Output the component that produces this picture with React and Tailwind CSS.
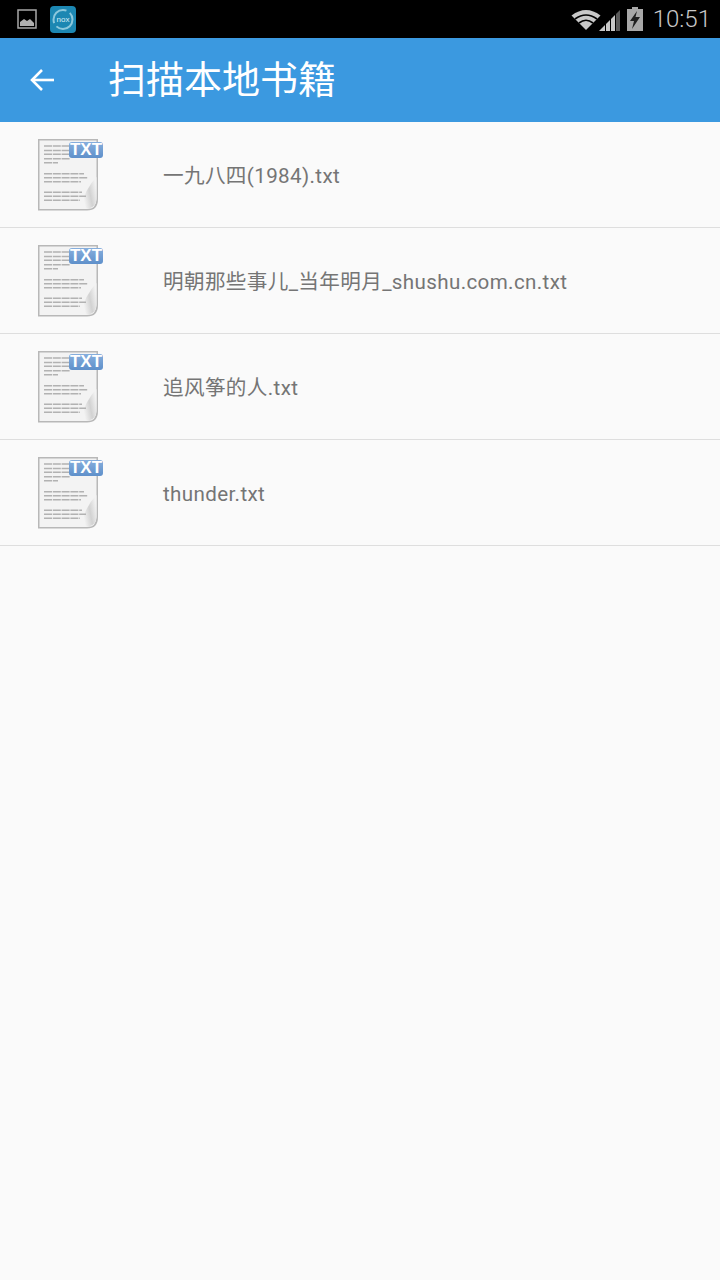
const FILES = ["一九八四(1984).txt", "明朝那些事儿_当年明月_shushu.com.cn.txt", "追风筝的人.txt", "thunder.txt"];

const TEXT_LINES = [
  [7, 28], [11.5, 28], [15.3, 30], [19.7, 26], [23.7, 14],
  [34.7, 40], [38.7, 44], [42.7, 37],
  [53.3, 38], [57.3, 42], [61.3, 36],
];

function TxtIcon() {
  return (
    <svg width="66" height="72" viewBox="0 0 66 72" className="block">
      <defs>
        <linearGradient id="sheen" x1="1" y1="0.35" x2="0.2" y2="0.65">
          <stop offset="0" stopColor="#f3f3f3" />
          <stop offset="0.5" stopColor="#d2d2d2" />
          <stop offset="1" stopColor="#f3f3f3" />
        </linearGradient>
        <linearGradient id="badge" x1="0" y1="0" x2="0" y2="1">
          <stop offset="0" stopColor="#86aedd" />
          <stop offset="1" stopColor="#5f90ca" />
        </linearGradient>
      </defs>
      <path d="M0.75 0.75H59.25V60Q59.25 70.75 49 70.75H0.75Z" fill="#f3f3f3" stroke="#b8b8b8" strokeWidth="1.5" />
      <path d="M42 69.5Q47 50 58.5 38V60Q58 69 49 69.5Z" fill="url(#sheen)" />
      {TEXT_LINES.map(([y, w], i) => (
        <line key={i} x1="6" y1={y} x2={6 + w} y2={y} stroke="#b2b2b2" strokeWidth="1.5" strokeDasharray="8 0.8" />
      ))}
      <rect x="31" y="3" width="34" height="16" rx="3" fill="url(#badge)" />
    </svg>
  );
}

function FileRow({ name }) {
  return (
    <div className="flex h-[106px] items-center border-b border-[#dedede]">
      <div className="relative ml-[38px] h-[72px] w-[125px]">
        <TxtIcon />
        <span className="absolute left-[31px] top-[3px] w-[34px] text-center text-[17px] leading-[16px] font-bold text-white font-['Liberation_Sans',sans-serif]">TXT</span>
      </div>
      <span className="mt-[2px] text-[20.6px] leading-[28px] tracking-[0.36px] text-[#757575]">{name}</span>
    </div>
  );
}

export default function App() {
  return (
    <div className="flex h-[1280px] w-[720px] flex-col overflow-hidden bg-[#fafafa] font-['Roboto','Noto_Sans_CJK_SC',sans-serif]">
      {/* Status bar */}
      <div className="flex h-[38px] items-center bg-black">
        <svg width="20" height="20" viewBox="0 0 20 20" className="ml-[17px]">
          <rect x="1" y="1" width="18" height="18" fill="none" stroke="#a8a8a8" strokeWidth="1.5" />
          <path d="M3 17V13L7 10L10 12L13 10L17 14V17Z" fill="#b0b0b0" />
        </svg>
        <svg width="26" height="27" viewBox="0 0 26 27" className="ml-[13px]">
          <rect width="26" height="27" rx="4" fill="#1c87b2" />
          <circle cx="13" cy="13.5" r="9.5" fill="none" stroke="#8cc8dc" strokeWidth="2" strokeDasharray="22 4" />
          <text x="13" y="16" textAnchor="middle" fontSize="8" fill="#d8eef6" fontFamily="Liberation Sans">nox</text>
        </svg>
        <svg width="30" height="22" viewBox="0 0 30 22" className="ml-auto">
          <path d="M0.5 7.5Q15 -3.5 29.5 7.5L15 22Z" fill="#c8c8c8" />
          <path d="M4 11Q15 3 26 11" fill="none" stroke="#000" strokeWidth="1.6" />
          <path d="M8 15Q15 9.5 22 15" fill="none" stroke="#000" strokeWidth="1.6" />
        </svg>
        <svg width="22" height="24" viewBox="0 0 22 24" className="ml-[-2px]">
          <path d="M0 24L6 18V24Z" fill="#c8c8c8" />
          <path d="M7 17L11 13V24H7Z" fill="#c8c8c8" />
          <path d="M12 12L16 8V24H12Z" fill="#c8c8c8" />
          <path d="M17 7L21 3V24H17Z" fill="#5a5a5a" />
        </svg>
        <svg width="16" height="24" viewBox="0 0 16 24" className="ml-[6px]">
          <path d="M5 0H11V2H16V24H0V2H5Z" fill="#a8a8a8" />
          <path d="M10 4L3 14H7L5 22L13 10H8.5Z" fill="#202020" />
        </svg>
        <span className="ml-[10px] mr-[9px] text-[24px] leading-[38px] font-light text-[#c8c8c8]">10:51</span>
      </div>

      {/* Toolbar */}
      <div className="flex h-[84px] items-center bg-[#3b99e0]">
        <svg width="24" height="24" viewBox="0 0 24 24" className="ml-[30px]" fill="none" stroke="#fff" strokeWidth="2.6">
          <path d="M24 12H2" />
          <path d="M12 2L2 12L12 22" />
        </svg>
        <span className="ml-[54px] text-[38px] leading-[44px] text-white">扫描本地书籍</span>
      </div>

      {/* File list */}
      {FILES.map((name) => <FileRow key={name} name={name} />)}
    </div>
  );
}
